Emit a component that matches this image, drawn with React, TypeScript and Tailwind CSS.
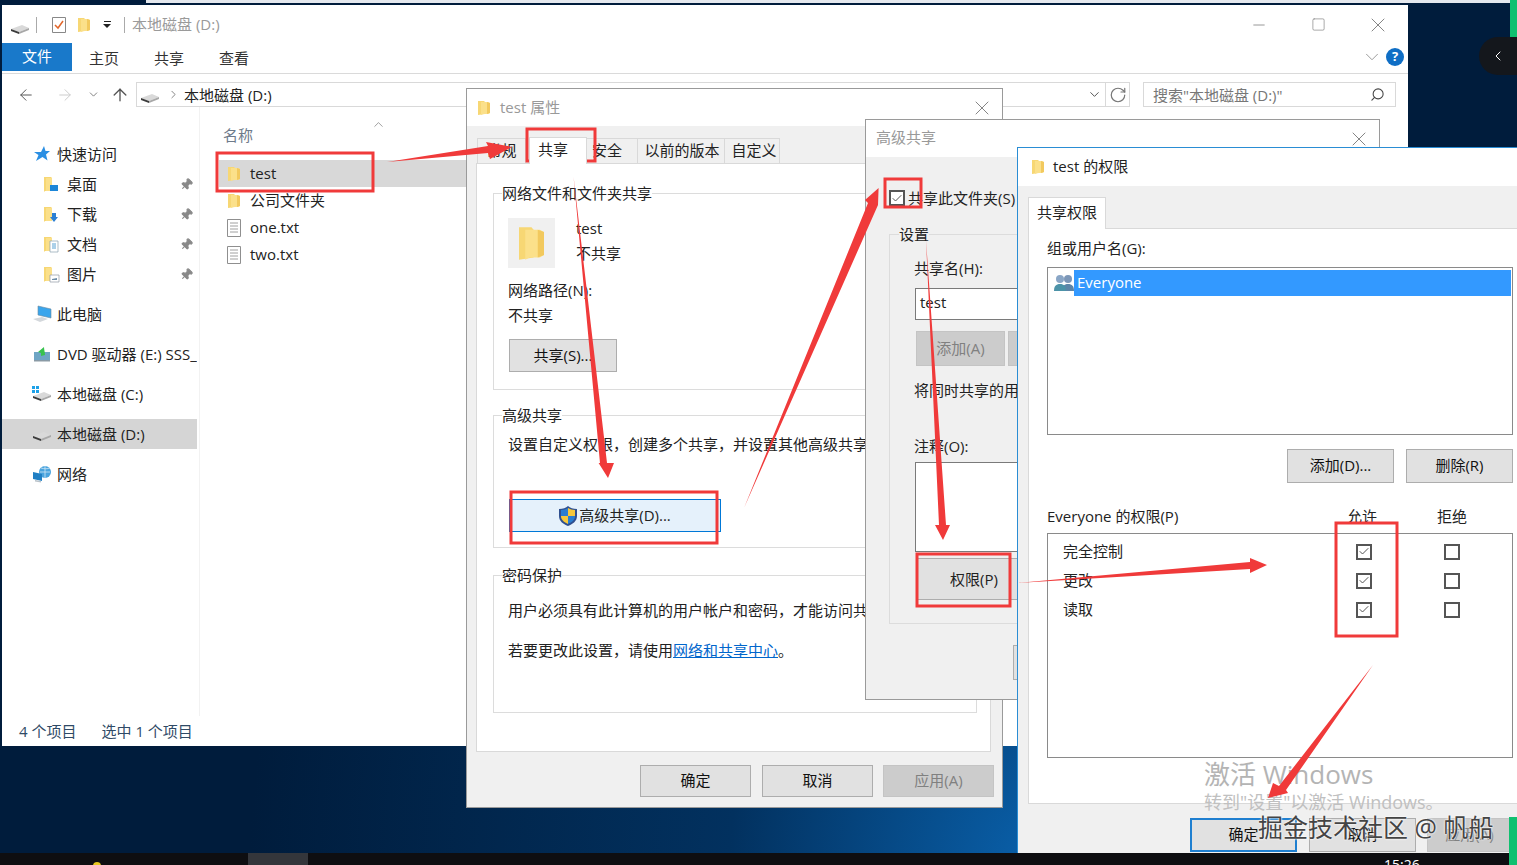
import React from "react";
import {
  ArrowLeft,
  ArrowRight,
  ArrowUp,
  Check,
  ChevronDown,
  ChevronLeft,
  ChevronRight,
  ChevronUp,
  Minus,
  Pin,
  RotateCw,
  Search,
  Square,
  X,
} from "lucide-react";

function FolderIcon({ className = "w-[12px] h-[16px]" }: { className?: string }) {
  return (
    <svg viewBox="0 0 12 16" preserveAspectRatio="none" className={className} aria-hidden="true">
      <path d="M0 1h6l1 1v12l-7 1z" fill="#f7d774" />
      <path d="M3 2h7l2 1v10l-2 1H5l-2 1z" fill="#fbe08a" />
      <path d="M9 2l3 1v10l-3 1z" fill="#f2c95e" />
    </svg>
  );
}

function DriveIcon({ windows = false }: { windows?: boolean }) {
  return (
    <svg viewBox="0 0 20 16" className="w-[20px] h-[16px]" aria-hidden="true">
      {windows && (
        <g fill="#1da1e8">
          <rect x="0" y="0" width="3" height="3" />
          <rect x="4" y="0" width="3" height="3" />
          <rect x="0" y="4" width="3" height="3" />
          <rect x="4" y="4" width="3" height="3" />
        </g>
      )}
      <path d="M1 10l11-4 7 3-10 4z" fill="#d9d9d9" />
      <path d="M1 10l8 3v2l-8-3z" fill="#3b3b3b" />
      <path d="M9 13l10-4v2l-10 4z" fill="#a8a8a8" />
    </svg>
  );
}

function FileIcon() {
  return (
    <svg viewBox="0 0 14 18" className="w-[14px] h-[18px]" aria-hidden="true">
      <path d="M.5.5h13v17H.5z" fill="#fff" stroke="#8f8f8f" />
      <path d="M3 4h8M3 7h8M3 10h8M3 13h8" stroke="#a0a0a0" />
    </svg>
  );
}

function NavIcon({ kind }: { kind: string }) {
  if (kind === "star") {
    return (
      <svg viewBox="0 0 18 18" className="w-[18px] h-[18px]" aria-hidden="true">
        <path d="M11 1l1.5 5H17l-4 3.5 1.5 6L9.5 12 3 16l2.5-6L1 7h7z" fill="#2b8fe3" />
      </svg>
    );
  }
  if (kind === "pc") {
    return (
      <svg viewBox="0 0 20 18" className="w-[20px] h-[18px]" aria-hidden="true">
        <path d="M6 1l13 3v9L6 10z" fill="#3aa5ec" stroke="#6c8aa0" strokeWidth=".6" />
        <path d="M1 14l9-2 6 2-8 3z" fill="#d4d8dc" />
      </svg>
    );
  }
  if (kind === "dvd") {
    return (
      <svg viewBox="0 0 18 16" className="w-[18px] h-[16px]" aria-hidden="true">
        <path d="M1 6h16v8H1z" fill="#6ea5c4" />
        <path d="M1 14h16v1.500H1z" fill="#8a9aa5" />
        <path d="M11 1L5 6l3 1v3l4-1c0-3-1-5-1-8z" fill="#38c24e" />
      </svg>
    );
  }
  if (kind === "net") {
    return (
      <svg viewBox="0 0 20 18" className="w-[20px] h-[18px]" aria-hidden="true">
        <circle cx="13" cy="7" r="6" fill="#4aa4de" />
        <path d="M9 3c3 1 7 1 9 0M8 7h10M13 1v12" stroke="#cfe7f6" strokeWidth=".8" fill="none" />
        <path d="M1 7l9 2v7l-9-2z" fill="#1f7fc4" />
        <path d="M3 15l6 1v1.500l-6-1z" fill="#b9c2c9" />
      </svg>
    );
  }
  const badge: Record<string, React.ReactNode> = {
    desktop: <path d="M6 9h8v6H6z" fill="#1c86d8" />,
    download: <path d="M8 7h4v4h2l-4 5-4-5h2z" fill="#2b7fd4" />,
    docs: (
      <g>
        <path d="M6 5h8v11H6z" fill="#fff" stroke="#8aa0b0" strokeWidth=".7" />
        <path d="M8 8h4M8 10h4M8 12h4" stroke="#2f8ac9" strokeWidth=".8" />
      </g>
    ),
    pictures: (
      <g>
        <path d="M6 9h9v7H6z" fill="#fff" stroke="#8f9aa3" strokeWidth=".7" />
        <path d="M8 13l5-1v2H8z" fill="#6e8ea8" />
      </g>
    ),
  };
  return (
    <svg viewBox="0 0 16 17" className="w-[16px] h-[17px]" aria-hidden="true">
      <path d="M0 1h7l1 1v13H1l-1 1z" fill="#f7d774" />
      <path d="M2 2h6v13H2z" fill="#fbe08a" />
      {badge[kind]}
    </svg>
  );
}

function ShieldIcon() {
  return (
    <svg viewBox="0 0 18 20" className="w-[18px] h-[20px]" aria-hidden="true">
      <path d="M9 0c2 2 5 3 9 3v7c0 5-4 8-9 10-5-2-9-5-9-10V3c4 0 7-1 9-3z" fill="#2f4f8f" />
      <path d="M9 2v8H2V4c3 0 5-1 7-2z" fill="#2a7dd1" />
      <path d="M9 2c2 1 4 2 7 2v6H9z" fill="#f6c83c" />
      <path d="M2 10h7v8c-4-2-7-4-7-8z" fill="#f6c83c" />
      <path d="M9 10h7c0 4-3 6-7 8z" fill="#2a7dd1" />
    </svg>
  );
}

function PeopleIcon() {
  return (
    <svg viewBox="0 0 20 18" className="w-[20px] h-[18px]" aria-hidden="true">
      <circle cx="14" cy="5" r="4" fill="#7c97b8" />
      <path d="M8 17c0-5 2-7 6-7s6 2 6 7z" fill="#5c85a8" />
      <circle cx="6" cy="5" r="4" fill="#8aa6c6" />
      <path d="M0 17c0-5 2-7 6-7s6 2 6 7z" fill="#4c93a8" />
    </svg>
  );
}

const btnVariants = {
  normal: "border border-[#adadad] bg-[#e1e1e1] text-[#111]",
  disabled: "border border-[#c4c4c4] bg-[#cccccc] text-[#808080]",
  focused: "border-2 border-[#1f7fd0] bg-[#e1e1e1] text-[#111]",
};

function Btn({
  children,
  className = "",
  variant = "normal",
}: {
  children: React.ReactNode;
  className?: string;
  variant?: keyof typeof btnVariants;
}) {
  return (
    <div className={`flex items-center justify-center pb-[1px] ${btnVariants[variant]} ${className}`}>
      {children}
    </div>
  );
}

function CheckBox({ checked = false }: { checked?: boolean }) {
  return (
    <div className="flex w-[16px] h-[16px] items-center justify-center border-2 border-[#555] bg-white">
      {checked && <Check size={13} strokeWidth={2} className="text-[#555]" />}
    </div>
  );
}

function Group({
  title,
  className,
  children,
}: {
  title: string;
  className: string;
  children: React.ReactNode;
}) {
  return (
    <fieldset className={`border border-[#dcdcdc] pl-[8px] min-w-0 ${className}`}>
      <legend className="h-[20px] leading-[20px] text-[#222]">{title}</legend>
      <div className="pl-[6px] whitespace-nowrap">{children}</div>
    </fieldset>
  );
}

const navItems = [
  { kind: "star", label: "快速访问", top: true, gap: 0 },
  { kind: "desktop", label: "桌面", pin: true, gap: 0 },
  { kind: "download", label: "下载", pin: true, gap: 0 },
  { kind: "docs", label: "文档", pin: true, gap: 0 },
  { kind: "pictures", label: "图片", pin: true, gap: 0 },
  { kind: "pc", label: "此电脑", top: true, gap: 10 },
  { kind: "dvd", label: "DVD 驱动器 (E:) SSS_", top: true, gap: 10 },
  { kind: "c", label: "本地磁盘 (C:)", top: true, gap: 10 },
  { kind: "d", label: "本地磁盘 (D:)", top: true, gap: 10, active: true },
  { kind: "net", label: "网络", top: true, gap: 10 },
];

function Explorer() {
  return (
    <div className="absolute left-[2px] top-[5px] flex h-[741px] w-[1406px] flex-col bg-white text-[#222]">
      {/* barra de título */}
      <div className="flex h-[38px] shrink-0 items-center pt-[1px]">
        <div className="ml-[8px] mt-[4px] w-[20px]">
          <DriveIcon />
        </div>
        <div className="ml-[6px] h-[16px] w-px bg-[#aaa]" />
        <svg viewBox="0 0 14 16" className="ml-[15px] h-[16px] w-[14px]" aria-hidden="true">
          <path d="M.5.5h13v15H.5z" fill="#fff" stroke="#888" />
          <path d="M3 8l3 3 5-7" stroke="#e2662a" strokeWidth="1.500" fill="none" />
        </svg>
        <div className="ml-[12px]">
          <FolderIcon />
        </div>
        <div className="ml-[13px] flex flex-col items-center gap-[2px]">
          <div className="h-px w-[7px] bg-[#222]" />
          <div className="h-0 w-0 border-x-[4px] border-t-[4px] border-x-transparent border-t-[#222]" />
        </div>
        <div className="ml-[13px] h-[16px] w-px bg-[#aaa]" />
        <span className="ml-[7px] text-[#9a9a9a]">本地磁盘 (D:)</span>
        <div className="ml-auto flex items-center pr-[18px] text-[#777]">
          <Minus size={18} strokeWidth={1} />
          <Square size={15} strokeWidth={1} className="ml-[43px]" />
          <X size={24} strokeWidth={0.9} className="ml-[40px]" />
        </div>
      </div>
      {/* pestañas */}
      <div className="flex h-[31px] shrink-0 items-start border-b border-[#dadada]">
        <div className="flex h-[28px] w-[70px] items-center justify-center bg-[#1979ca] pb-[2px] text-white">文件</div>
        <div className="flex h-[28px] items-center gap-[35px] pl-[17px] pt-[2px] text-[#333]">
          <span>主页</span>
          <span>共享</span>
          <span>查看</span>
        </div>
        <div className="ml-auto flex h-[28px] items-center pr-[4px]">
          <ChevronDown size={22} strokeWidth={0.9} className="text-[#888]" />
          <div className="ml-[3px] flex h-[18px] w-[18px] items-center justify-center rounded-full bg-[#0f6ec5] text-[13px] font-bold text-white">
            ?
          </div>
        </div>
      </div>
      {/* dirección */}
      <div className="flex h-[33px] shrink-0 items-end text-[#333]">
        <div className="flex h-[25px] w-[134px] items-center">
          <ArrowLeft size={18} strokeWidth={1.3} className="ml-[15px] text-[#555]" />
          <ArrowRight size={18} strokeWidth={1.3} className="ml-[21px] text-[#ccc]" />
          <ChevronDown size={13} strokeWidth={1.5} className="ml-[13px] text-[#666]" />
          <ArrowUp size={20} strokeWidth={1.6} className="ml-[10px] text-[#555]" />
        </div>
        <div className="flex h-[25px] w-[994px] items-center border border-[#d9d9d9]">
          <div className="ml-[3px] mt-[2px]">
            <DriveIcon />
          </div>
          <ChevronRight size={13} strokeWidth={1.3} className="ml-[7px] text-[#555]" />
          <span className="ml-[4px] mt-[2px] text-[#222]">本地磁盘 (D:)</span>
          <ChevronDown size={15} strokeWidth={1.6} className="ml-auto mr-[3px] text-[#555]" />
          <div className="flex h-full w-[24px] items-center justify-center border-l border-[#d9d9d9]">
            <RotateCw size={18} strokeWidth={1.6} className="text-[#777]" />
          </div>
        </div>
        <div className="ml-[13px] flex h-[25px] w-[253px] items-center border border-[#d9d9d9] pl-[9px] text-[#777]">
          <span className="mt-[2px]">搜索"本地磁盘 (D:)"</span>
          <Search size={15} strokeWidth={1.7} className="ml-auto mr-[10px] -scale-x-100 text-[#444]" />
        </div>
      </div>
      {/* contenido */}
      <div className="flex min-h-0 flex-1">
        <nav className="w-[198px] shrink-0 border-r border-[#f2f2f2] pt-[32px]">
          {navItems.map((item) => (
            <div
              key={item.label}
              style={{ marginTop: item.gap }}
              className={`flex h-[30px] w-[195px] items-center overflow-hidden whitespace-nowrap ${item.active ? "bg-[#d5d5d5]" : ""}`}
            >
              <div
                className={`flex shrink-0 justify-center ${item.top ? "ml-[30px] w-[20px]" : "ml-[42px] w-[16px]"}`}
              >
                {item.kind === "c" ? (
                  <DriveIcon windows />
                ) : item.kind === "d" ? (
                  <DriveIcon />
                ) : (
                  <NavIcon kind={item.kind} />
                )}
              </div>
              <span className={item.top ? "ml-[5px]" : "ml-[7px]"}>{item.label}</span>
              {item.pin && (
                <Pin size={13} className="ml-auto mr-[4px] rotate-45 fill-[#888] text-[#888]" />
              )}
            </div>
          ))}
        </nav>
        <div className="min-w-0 flex-1 pt-[7px]">
          <div className="flex h-[36px] items-end pb-[4px] pl-[23px] text-[#6d7a8a]">
            <span>名称</span>
            <ChevronUp size={15} strokeWidth={1} className="mb-[14px] ml-[118px] text-[#666]" />
          </div>
          <div className="mt-[10px] flex flex-col text-[15px]">
            <div className="ml-[19px] flex h-[27px] items-center bg-[#d8d8d8] pl-[9px]">
              <FolderIcon />
              <span className="ml-[10px]">test</span>
            </div>
            <div className="flex h-[27px] items-center pl-[28px]">
              <FolderIcon />
              <span className="ml-[10px]">公司文件夹</span>
            </div>
            <div className="flex h-[27px] items-center pl-[27px]">
              <FileIcon />
              <span className="ml-[9px]">one.txt</span>
            </div>
            <div className="flex h-[27px] items-center pl-[27px]">
              <FileIcon />
              <span className="ml-[9px]">two.txt</span>
            </div>
          </div>
        </div>
      </div>
      <div className="flex h-[30px] shrink-0 items-start pl-[17px] pt-[4px] text-[#2f4a66]">
        <span>4 个项目</span>
        <span className="ml-[25px]">选中 1 个项目</span>
      </div>
    </div>
  );
}

function PropertiesWindow() {
  return (
    <div className="absolute left-[466px] top-[88px] flex h-[720px] w-[537px] flex-col border border-[#9a9a9a] bg-[#f0f0f0]">
      <div className="flex h-[37px] shrink-0 items-center bg-white pl-[11px] text-[#999]">
        <FolderIcon />
        <span className="ml-[10px] mb-[1px]">test 属性</span>
        <X size={24} strokeWidth={0.9} className="ml-auto mr-[8px] text-[#777]" />
      </div>
      <div className="flex h-[37px] shrink-0 items-end pl-[10px] text-[#222]">
        <div className="flex h-[25px] w-[49px] items-center justify-center border border-b-0 border-[#d9d9d9] pb-[2px]">常规</div>
        <div className="relative z-10 ml-[3px] flex h-[27px] w-[58px] -mb-px items-center justify-start border border-b-0 border-[#d9d9d9] bg-white pb-[4px] pl-[8px]">
          共享
        </div>
        <div className="flex h-[25px] w-[51px] items-center border border-b-0 border-l-0 border-[#d9d9d9] pb-[2px] pl-[5px]">安全</div>
        <div className="flex h-[25px] w-[87px] items-center justify-center border border-b-0 border-l-0 border-[#d9d9d9] pb-[2px] pl-[2px] whitespace-nowrap">以前的版本</div>
        <div className="flex h-[25px] w-[55px] items-center justify-center border border-b-0 border-l-0 border-[#d9d9d9] pb-[2px] pl-[4px] whitespace-nowrap">自定义</div>
      </div>
      <div className="ml-[9px] flex h-[589px] w-[515px] flex-col border border-[#d9d9d9] bg-white pl-[16px] pt-[19px] text-[#222]">
        <Group title="网络文件和文件夹共享" className="h-[207px] w-[484px]">
          <div className="mt-[15px] flex">
            <div className="flex h-[50px] w-[47px] items-center justify-center bg-[#f0f0f0]">
              <FolderIcon className="w-[25px] h-[37px]" />
            </div>
            <div className="ml-[21px]">
              <div className="leading-[20px]">test</div>
              <div className="mt-[5px] leading-[20px]">不共享</div>
            </div>
          </div>
          <div className="mt-[12px] leading-[20px]">网络路径(N):</div>
          <div className="mt-[5px] leading-[20px]">不共享</div>
          <Btn className="ml-px mt-[14px] h-[33px] w-[108px]">共享(S)...</Btn>
        </Group>
        <Group title="高级共享" className="mt-[15px] h-[143px] w-[484px]">
          <div className="mt-[9px] leading-[20px]">设置自定义权限，创建多个共享，并设置其他高级共享选项。</div>
          <div className="ml-px mt-[45px] flex h-[33px] w-[212px] items-center justify-center border border-[#0078d7] bg-[#e5f1fb]">
            <ShieldIcon />
            <span className="ml-[2px]">高级共享(D)...</span>
          </div>
        </Group>
        <Group title="密码保护" className="mt-[17px] h-[148px] w-[484px]">
          <div className="mt-[15px] leading-[20px]">用户必须具有此计算机的用户帐户和密码，才能访问共享文件夹。</div>
          <div className="mt-[20px] leading-[20px]">
            若要更改此设置，请使用
            <span className="text-[#0066cc] underline">网络和共享中心</span>。
          </div>
        </Group>
      </div>
      <div className="mt-[13px] flex justify-end gap-[11px] pr-[8px]">
        <Btn className="h-[32px] w-[111px] translate-x-px">确定</Btn>
        <Btn className="h-[32px] w-[111px] translate-x-px">取消</Btn>
        <Btn variant="disabled" className="h-[32px] w-[111px]">应用(A)</Btn>
      </div>
    </div>
  );
}

function AdvancedWindow() {
  return (
    <div className="absolute left-[865px] top-[119px] flex h-[581px] w-[515px] flex-col border border-[#9a9a9a] bg-[#f0f0f0] text-[#222]">
      <div className="flex h-[37px] shrink-0 items-center bg-white pb-[3px] pl-[10px] text-[#999]">
        <span>高级共享</span>
        <X size={24} strokeWidth={0.9} className="ml-auto mr-[8px] mt-[3px] text-[#777]" />
      </div>
      <div className="flex pl-[23px] pt-[31px]">
        <div className="flex h-[20px] items-center">
          <CheckBox checked />
          <span className="ml-[3px] whitespace-nowrap">共享此文件夹(S)</span>
        </div>
      </div>
      <fieldset className="ml-[23px] mt-[16px] h-[400px] w-[470px] min-w-0 border border-[#dcdcdc] pl-[9px]">
        <legend className="h-[20px] leading-[20px]">设置</legend>
        <div className="pl-[15px] whitespace-nowrap">
          <div className="mt-[14px] leading-[20px]">共享名(H):</div>
          <div className="ml-px mt-[10px] flex h-[32px] w-[440px] items-center border border-[#7a7a7a] bg-white pb-[4px] pl-[4px]">
            test
          </div>
          <div className="ml-[2px] mt-[11px] flex gap-[3px]">
            <Btn variant="disabled" className="h-[35px] w-[89px]">添加(A)</Btn>
            <Btn variant="disabled" className="h-[35px] w-[89px]">删除(R)</Btn>
          </div>
          <div className="mt-[14px] leading-[20px]">将同时共享的用户数量限制为(L):</div>
          <div className="mt-[36px] leading-[20px]">注释(O):</div>
          <div className="ml-px mt-[6px] h-[90px] w-[440px] border border-[#7a7a7a] bg-white" />
          <div className="ml-[3px] mt-[6px] flex h-[42px] w-[120px] items-center border-y border-[#adadad] bg-[#e1e1e1] pl-[33px]">
            权限(P)
          </div>
        </div>
      </fieldset>
      <div className="ml-[147px] mt-[21px] h-[35px] w-[80px] border border-[#adadad] bg-[#e1e1e1]" />
    </div>
  );
}

const permissionRows = ["完全控制", "更改", "读取"];

function PermissionsWindow() {
  return (
    <div className="absolute left-[1017px] top-[147px] flex h-[706px] w-[500px] flex-col border-l border-t border-[#2a8dd4] bg-[#f0f0f0] text-[#222]">
      <div className="flex h-[38px] shrink-0 items-center bg-white pl-[14px]">
        <FolderIcon />
        <span className="mb-[2px] ml-[9px]">test 的权限</span>
      </div>
      <div className="flex h-[42px] shrink-0 items-end pl-[10px]">
        <div className="relative z-10 -mb-px flex h-[32px] w-[78px] items-center justify-center border border-b-0 border-[#d9d9d9] bg-white pb-[3px]">
          共享权限
        </div>
      </div>
      <div className="ml-[10px] h-[576px] w-[489px] border border-r-0 border-[#d9d9d9] bg-white pl-[18px] pt-[9px]">
        <div className="leading-[20px]">组或用户名(G):</div>
        <div className="mt-[9px] h-[168px] w-[466px] border border-[#8a8a8a] pt-[2px]">
          <div className="flex h-[26px] items-center pl-[6px]">
            <PeopleIcon />
            <div className="flex h-full flex-1 items-center bg-[#3399ff] pb-[1px] pl-[3px] mr-[1px] text-white">Everyone</div>
          </div>
        </div>
        <div className="mt-[14px] flex w-[466px] justify-end gap-[12px]">
          <Btn className="h-[34px] w-[107px]">添加(D)...</Btn>
          <Btn className="h-[34px] w-[107px]">删除(R)</Btn>
        </div>
        <div className="mt-[23px] flex leading-[20px]">
          <span className="w-[300px]">Everyone 的权限(P)</span>
          <span className="w-[90px]">允许</span>
          <span>拒绝</span>
        </div>
        <div className="mt-[7px] h-[225px] w-[466px] border border-[#8a8a8a] pl-[15px] pt-[3px]">
          {permissionRows.map((row) => (
            <div key={row} className="flex h-[29px] items-center">
              <span className="w-[293px]">{row}</span>
              <CheckBox checked />
              <div className="ml-[72px]">
                <CheckBox />
              </div>
            </div>
          ))}
        </div>
      </div>
      <div className="mt-[14px] flex pl-[172px]">
        <Btn variant="focused" className="h-[34px] w-[107px]">确定</Btn>
        <Btn className="ml-[12px] h-[34px] w-[107px]">取消</Btn>
        <Btn variant="disabled" className="ml-[11px] h-[34px] w-[85px]">应用(A)</Btn>
      </div>
    </div>
  );
}

function Annotations() {
  const red = "#f03a3a";
  const rects = [
    [217, 153, 156, 38],
    [527, 129, 68, 32],
    [511, 492, 206, 51],
    [885, 179, 36, 28],
    [917, 554, 93, 52],
    [1336, 523, 61, 113],
  ];
  return (
    <svg viewBox="0 0 1517 865" className="pointer-events-none absolute inset-0 h-[865px] w-[1517px]" aria-hidden="true">
      {rects.map(([x, y, w, h]) => (
        <rect key={`${x}-${y}`} x={x} y={y} width={w} height={h} fill="none" stroke={red} strokeWidth="3" />
      ))}
      <path d="M387 162L488 146L486 142L512 147L490 159L488 153z" fill={red} />
      <path d="M573.600 177L607 463H614L608 478L598.600 463H600z" fill={red} />
      <path d="M744 508L868 203L865 200L878.600 188L878 205z" fill={red} />
      <path d="M926 240L946 525H950L943 540L935 525H939z" fill={red} />
      <path d="M1017 583L1250 562V558L1267 565L1250 573V569z" fill={red} />
      <path d="M1373 665L1286 790L1288 793L1268 798L1273 783L1279 786z" fill={red} />
    </svg>
  );
}

export default function App() {
  return (
    <div className="relative h-[865px] w-[1517px] overflow-hidden bg-[radial-gradient(circle_at_1050px_860px,#0a62ad_0,#02315f_320px,#001c3c_800px)] font-['Open_Sans','Noto_Sans_CJK_SC',sans-serif] text-[15px]">
      <div className="absolute left-[146px] top-0 h-[3px] w-[1364px] bg-[#e4e8ee]" />
      <Explorer />
      <PropertiesWindow />
      <AdvancedWindow />
      <PermissionsWindow />

      {/* pestaña lateral y franjas verdes */}
      <div className="absolute right-0 top-0 h-[37px] w-[7px] bg-[#10c070]" />
      <div className="absolute right-0 top-[37px] flex h-[38px] w-[38px] items-center justify-center rounded-l-full bg-[#14171c] text-white">
        <ChevronLeft size={16} strokeWidth={1.5} />
      </div>

      {/* barra de tareas */}
      <div className="absolute bottom-0 left-0 flex h-[12px] w-full overflow-hidden bg-[#0e0e11]">
        <div className="ml-[93px] mt-[9px] h-[8px] w-[8px] rounded-full bg-[#e8c820]" />
        <div className="ml-[147px] h-full w-[60px] bg-[#34363b]" />
        <span className="ml-[1076px] mt-[3px] text-[14px] leading-[18px] text-white">15:26</span>
      </div>
      <div className="absolute bottom-0 right-0 h-[48px] w-[8px] bg-[#10c070]" />

      {/* marcas de agua */}
      <div className="absolute left-[1204px] top-[756px] whitespace-nowrap text-[26px] leading-[36px] text-[#b4b4b4]">激活 Windows</div>
      <div className="absolute left-[1204px] top-[790px] whitespace-nowrap text-[18px] leading-[24px] text-[#c0c0c0]">转到"设置"以激活 Windows。</div>
      <div className="absolute left-[1258px] top-[809px] whitespace-nowrap text-[25px] leading-[36px] text-[#444] [text-shadow:0_0_2px_#fff,0_0_2px_#fff]">
        掘金技术社区 @ 帆船
      </div>

      <Annotations />
    </div>
  );
}
